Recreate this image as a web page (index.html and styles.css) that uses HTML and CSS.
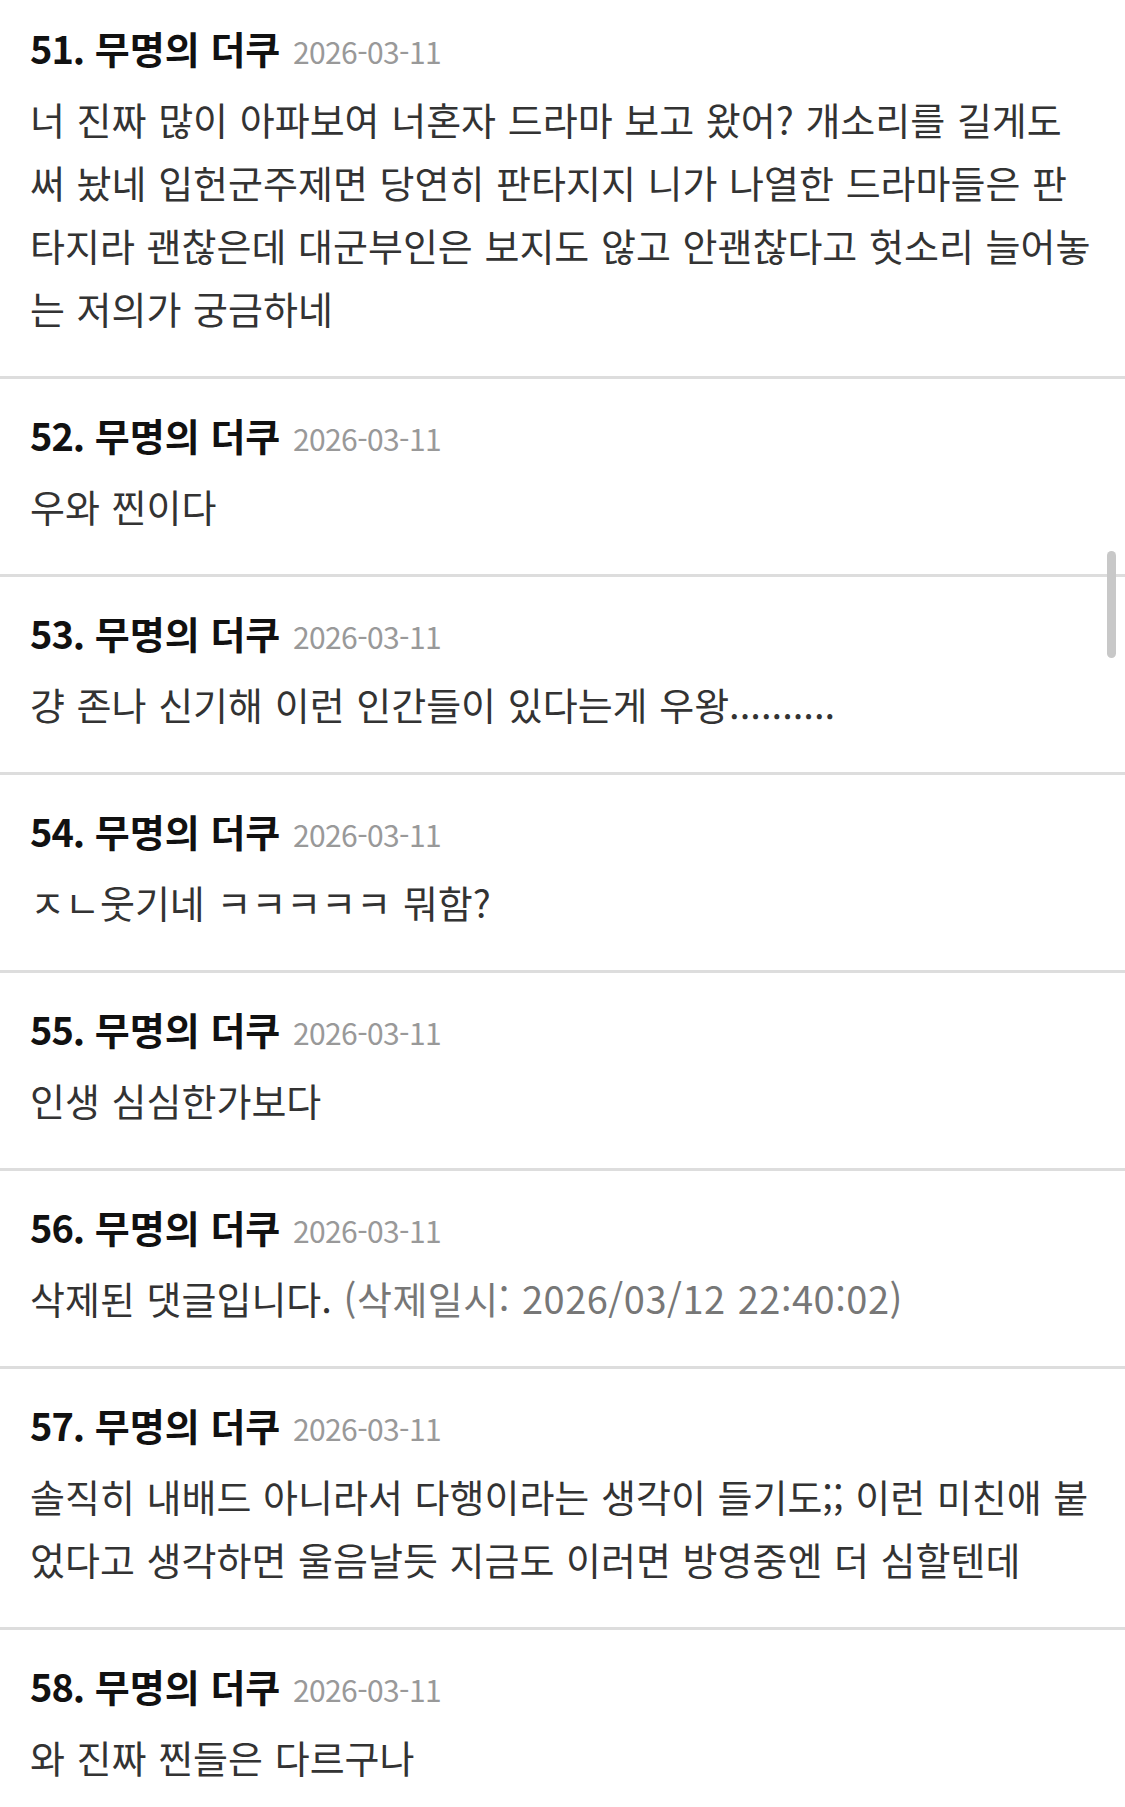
FILE: index.html
```html
<!DOCTYPE html>
<html lang="ko">
<head>
    <meta charset="UTF-8">
    <meta name="viewport" content="width=device-width, initial-scale=1.0">
    <title>댓글</title>
    <link rel="stylesheet" href="styles.css">
</head>
<body>
    <div class="comment-list">
        <div class="comment">
            <div class="comment-head"><span class="num">51.</span> 무명의 더쿠 <span class="date">2026-03-11</span></div>
            <p class="comment-body">너 진짜 많이 아파보여 너혼자 드라마 보고 왔어? 개소리를 길게도 써 놨네 입헌군주제면 당연히 판타지지 니가 나열한 드라마들은 판타지라 괜찮은데 대군부인은 보지도 않고 안괜찮다고 헛소리 늘어놓는 저의가 궁금하네</p>
        </div>
        <div class="comment">
            <div class="comment-head"><span class="num">52.</span> 무명의 더쿠 <span class="date">2026-03-11</span></div>
            <p class="comment-body">우와 찐이다</p>
        </div>
        <div class="comment">
            <div class="comment-head"><span class="num">53.</span> 무명의 더쿠 <span class="date">2026-03-11</span></div>
            <p class="comment-body">걍 존나 신기해 이런 인간들이 있다는게 우왕..........</p>
        </div>
        <div class="comment">
            <div class="comment-head"><span class="num">54.</span> 무명의 더쿠 <span class="date">2026-03-11</span></div>
            <p class="comment-body">ㅈㄴ웃기네 ㅋㅋㅋㅋㅋ 뭐함?</p>
        </div>
        <div class="comment">
            <div class="comment-head"><span class="num">55.</span> 무명의 더쿠 <span class="date">2026-03-11</span></div>
            <p class="comment-body">인생 심심한가보다</p>
        </div>
        <div class="comment">
            <div class="comment-head"><span class="num">56.</span> 무명의 더쿠 <span class="date">2026-03-11</span></div>
            <p class="comment-body">삭제된 댓글입니다. <span class="deleted-at">(삭제일시: 2026/03/12 22:40:02)</span></p>
        </div>
        <div class="comment">
            <div class="comment-head"><span class="num">57.</span> 무명의 더쿠 <span class="date">2026-03-11</span></div>
            <p class="comment-body">솔직히 내배드 아니라서 다행이라는 생각이 들기도;; 이런 미친애 붙었다고 생각하면 울음날듯 지금도 이러면 방영중엔 더 심할텐데</p>
        </div>
        <div class="comment">
            <div class="comment-head"><span class="num">58.</span> 무명의 더쿠 <span class="date">2026-03-11</span></div>
            <p class="comment-body">와 진짜 찐들은 다르구나</p>
        </div>
    </div>

    <div class="scroll-thumb"></div>
</body>
</html>
```

FILE: styles.css
```css
body {
    margin: 0;
    background: #fff;
    font-family: "Noto Sans CJK KR", "Noto Sans", sans-serif;
    color: #333;
    overflow: hidden;
}
.comment-list {
    margin-top: -8px;
}
.comment {
    padding: 31px 29px 37px 30px;
    border-bottom: 3px solid #ddd;
}
.comment-head {
    font-size: 38px;
    font-weight: bold;
    line-height: 50px;
    height: 50px;
    color: #111;
    margin-bottom: 14px;
}
.num {
    letter-spacing: -1px;
}
.date {
    font-size: 30px;
    font-weight: normal;
    line-height: 1;
    color: #999;
    letter-spacing: -0.6px;
    margin-left: 2px;
}
.comment-body {
    margin: 0;
    font-size: 38px;
    line-height: 63px;
    word-spacing: 1px;
}
.deleted-at {
    color: #777;
    letter-spacing: 0.5px;
}
.scroll-thumb {
    position: fixed;
    right: 9px;
    top: 551px;
    width: 9px;
    height: 107px;
    border-radius: 5px;
    background: #c8c8c8;
}
```
